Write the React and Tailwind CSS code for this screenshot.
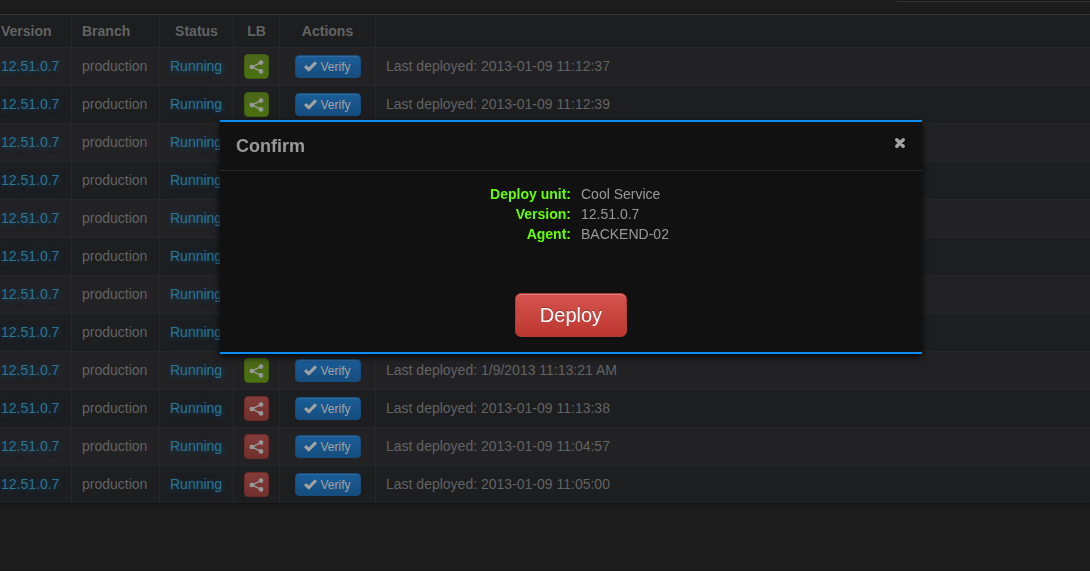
import React from "react";

const rows = [
  { lb: true, deployed: "2013-01-09 11:12:37" },
  { lb: true, deployed: "2013-01-09 11:12:39" },
  { lb: true, deployed: "2013-01-09 11:12:42" },
  { lb: true, deployed: "2013-01-09 11:12:45" },
  { lb: true, deployed: "2013-01-09 11:12:51" },
  { lb: true, deployed: "2013-01-09 11:12:58" },
  { lb: true, deployed: "2013-01-09 11:13:04" },
  { lb: true, deployed: "2013-01-09 11:13:12" },
  { lb: true, deployed: "1/9/2013 11:13:21 AM" },
  { lb: false, deployed: "2013-01-09 11:13:38" },
  { lb: false, deployed: "2013-01-09 11:04:57" },
  { lb: false, deployed: "2013-01-09 11:05:00" },
];

const details = [
  ["Deploy unit:", "Cool Service"],
  ["Version:", "12.51.0.7"],
  ["Agent:", "BACKEND-02"],
];

function ShareIcon() {
  return (
    <svg width="15" height="14" viewBox="0 0 15 14" fill="#999" stroke="#999" aria-hidden="true">
      <path d="M12 2.6 3 7l9 4.4" fill="none" strokeWidth="1.5" />
      <circle cx="2.8" cy="7" r="2.3" stroke="none" />
      <circle cx="12" cy="2.6" r="2.3" stroke="none" />
      <circle cx="12" cy="11.4" r="2.3" stroke="none" />
    </svg>
  );
}

function CheckIcon() {
  return (
    <svg width="13" height="11" viewBox="0 0 13 11" fill="#a3a3a3" aria-hidden="true">
      <path d="M0 6.2 2.2 4l2.6 2.5L10.8.3 13 2.5 4.8 10.8Z" />
    </svg>
  );
}

function CloseIcon() {
  return (
    <svg width="10" height="10" viewBox="0 0 10 10" stroke="#a3a3a3" strokeWidth="3.4" strokeLinecap="round" aria-hidden="true">
      <path d="M1.8 1.8 8.2 8.2M8.2 1.8 1.8 8.2" />
    </svg>
  );
}

const headCell = "border-t border-l border-t-[#383838] border-l-[#272728]";
const textCell = "border-t border-l border-[#272728] px-[10px] pt-2 align-top";
const buttonCell = "border-t border-l border-[#272728] px-[10px]";
const glow = "text-[#2b7596] [text-shadow:1px_1px_6px_#0f5c8caa]";

function DeploymentTable() {
  return (
    <table className="w-full table-fixed border-separate border-spacing-0 text-left shadow-[0_1px_4px_#101010]">
      <colgroup>
        <col className="w-[71px]" />
        <col className="w-[88px]" />
        <col className="w-[74px]" />
        <col className="w-[46px]" />
        <col className="w-[96px]" />
        <col />
      </colgroup>
      <thead>
        <tr className="h-[33px] bg-[#1c1e20] text-[#636363]">
          <th className="border-t border-[#383838] pl-px">Version</th>
          <th className={`${headCell} px-[10px]`}>Branch</th>
          <th className={`${headCell} text-center`}>Status</th>
          <th className={`${headCell} text-center`}>LB</th>
          <th className={`${headCell} text-center`}>Actions</th>
          <th className={headCell} aria-label="Last deployment" />
        </tr>
      </thead>
      <tbody>
        {rows.map((row, i) => (
          <tr key={i} className="h-[38px] bg-[#1c1e20] text-[#636363] odd:bg-[#222224]">
            <td className="border-t border-[#272728] pt-2 pl-px align-top">
              <a href="#version" className={glow}>12.51.0.7</a>
            </td>
            <td className={textCell}>production</td>
            <td className={textCell}>
              <a href="#status" className={glow}>Running</a>
            </td>
            <td className={buttonCell}>
              <button
                type="button"
                aria-label="Load balancer"
                className={
                  row.lb
                    ? "flex size-[25px] items-center justify-center rounded border border-[#40600f] bg-linear-to-b from-[#4b6719] to-[#4a7210]"
                    : "flex size-[25px] items-center justify-center rounded border border-[#6e2b29] bg-linear-to-b from-[#823d3a] to-[#72302c]"
                }
              >
                <ShareIcon />
              </button>
            </td>
            <td className={buttonCell}>
              <button
                type="button"
                className="mx-auto flex h-[23px] w-[66px] items-center justify-center gap-[3px] rounded border border-[#164d7c] bg-linear-to-b from-[#1a5e99] to-[#154d7e] text-xs text-[#a3a3a3] shadow-[inset_0_1px_0_#31699b]"
              >
                <CheckIcon />
                Verify
              </button>
            </td>
            <td className={textCell}>Last deployed: {row.deployed}</td>
          </tr>
        ))}
      </tbody>
    </table>
  );
}

function ConfirmDialog() {
  return (
    <div className="fixed inset-0 flex items-start justify-center pt-[120px] pl-[52px]">
      <section
        role="dialog"
        aria-modal="true"
        aria-labelledby="confirm-title"
        className="w-full max-w-[702px] border-y-2 border-[#0a8cf5] bg-[#111] shadow-[0_3px_7px_#000000cc]"
      >
        <header className="flex items-center justify-between border-b border-[#2a2a2a] py-2 pr-[17px] pl-4">
          <h2 id="confirm-title" className="text-lg leading-8 font-bold text-[#999]">Confirm</h2>
          <button type="button" aria-label="Close" className="mb-1.5">
            <CloseIcon />
          </button>
        </header>
        <dl className="grid grid-cols-2 pt-[13px]">
          {details.map(([label, value]) => (
            <React.Fragment key={label}>
              <dt className="text-right font-bold text-[#66ff00]">{label}</dt>
              <dd className="pl-[10px] text-[#999]">{value}</dd>
            </React.Fragment>
          ))}
        </dl>
        <div className="flex justify-center pt-[49px] pb-[15px]">
          <button
            type="button"
            className="h-[44px] rounded-md border border-[#b03a35] bg-linear-to-b from-[#d5544f] to-[#bd362f] px-6 text-xl text-white shadow-[inset_0_1px_0_#e07f7b] [text-shadow:0_-1px_0_#00000040]"
          >
            Deploy
          </button>
        </div>
      </section>
    </div>
  );
}

export default function App() {
  return (
    <div className="flex min-h-screen flex-col bg-[#1c1c1c] font-['Liberation_Sans',Arial,sans-serif] text-sm leading-5">
      <div className="flex h-[14px] items-start justify-end">
        <div className="h-[2px] w-[194px] rounded-bl border-b border-[#333] bg-[#181818]" />
      </div>
      <main className="grow">
        <DeploymentTable />
      </main>
      <footer className="h-[2px] bg-[#191919]" />
      <ConfirmDialog />
    </div>
  );
}
